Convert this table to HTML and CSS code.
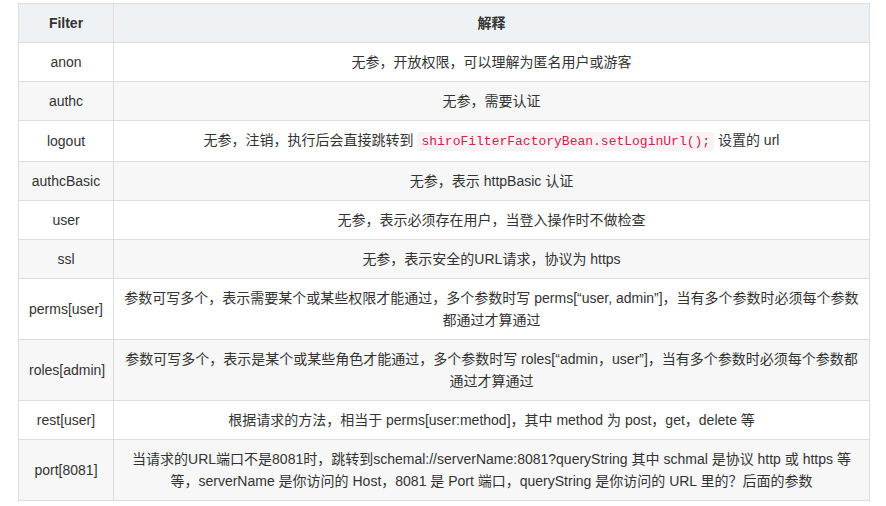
FILE: index.html
```html
<!DOCTYPE html>
<html lang="zh-CN">
<head>
  <meta charset="UTF-8">
  <title>Shiro Filter</title>
  <link rel="stylesheet" href="styles.css">
</head>
<body>

  <table class="filters">
    <thead>
      <tr>
        <th class="name">Filter</th>
        <th>解释</th>
      </tr>
    </thead>
    <tbody>
      <tr>
        <td>anon</td>
        <td>无参，开放权限，可以理解为匿名用户或游客</td>
      </tr>
      <tr>
        <td>authc</td>
        <td>无参，需要认证</td>
      </tr>
      <tr>
        <td>logout</td>
        <td>无参，注销，执行后会直接跳转到 <code>shiroFilterFactoryBean.setLoginUrl();</code> 设置的 url</td>
      </tr>
      <tr>
        <td>authcBasic</td>
        <td>无参，表示 httpBasic 认证</td>
      </tr>
      <tr>
        <td>user</td>
        <td>无参，表示必须存在用户，当登入操作时不做检查</td>
      </tr>
      <tr>
        <td>ssl</td>
        <td>无参，表示安全的URL请求，协议为 https</td>
      </tr>
      <tr>
        <td>perms[user]</td>
        <td>参数可写多个，表示需要某个或某些权限才能通过，多个参数时写 perms[“user, admin”]，当有多个参数时必须每个参数都通过才算通过</td>
      </tr>
      <tr>
        <td>roles[admin]</td>
        <td>参数可写多个，表示是某个或某些角色才能通过，多个参数时写 roles[“admin，user”]，当有多个参数时必须每个参数都通过才算通过</td>
      </tr>
      <tr>
        <td>rest[user]</td>
        <td>根据请求的方法，相当于 perms[user:method]，其中 method 为 post，get，delete 等</td>
      </tr>
      <tr>
        <td>port[8081]</td>
        <td>当请求的URL端口不是8081时，跳转到schemal://serverName:8081?queryString 其中 schmal 是协议 http 或 https 等等，serverName 是你访问的 Host，8081 是 Port 端口，queryString 是你访问的 URL 里的？后面的参数</td>
      </tr>
    </tbody>
  </table>

</body>
</html>
```

FILE: styles.css
```css
body {
  margin: 0;
  padding: 3px 0 0 18px;
  background-color: white;
  font-family: "Liberation Sans", Arial, "Noto Sans CJK SC", sans-serif;
  font-size: 14px;
  color: #333;
}

.filters {
  width: 852px;
  border-collapse: collapse;
  table-layout: fixed;
}

.filters th, .filters td {
  border: 1px solid #ddd;
  padding: 8px 10px;
  line-height: 22px;
  text-align: center;
}

.filters th {
  background-color: #eff2f5;
  font-weight: bold;
}

.filters th.name {
  width: 74px;
}

.filters tbody tr:nth-child(even) {
  background-color: #f7f7f7;
}

code {
  font-family: "Liberation Mono", "DejaVu Sans Mono", monospace;
  font-size: 13px;
  color: #c7254e;
  background-color: #f9f2f4;
  padding: 2px 4px;
  border-radius: 3px;
}
```
